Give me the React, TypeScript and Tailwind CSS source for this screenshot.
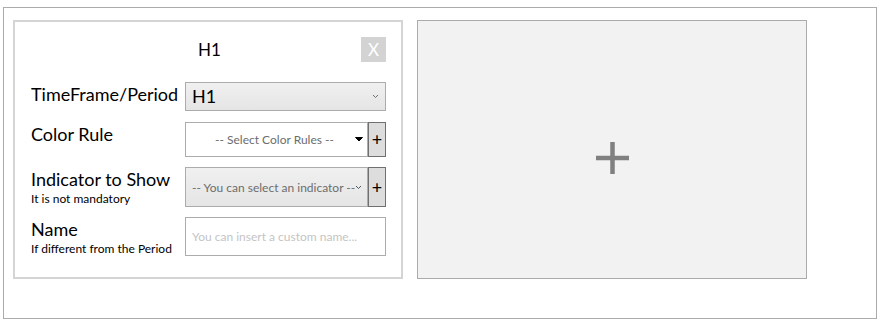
const font = "font-['Lato',sans-serif]"

function Chevron({ className }: { className?: string }) {
  return (
    <svg width="7" height="5" viewBox="0 0 7 5" className={className}>
      <path d="M1 1 L3.5 3.5 L6 1" fill="none" stroke="currentColor" strokeWidth="1" />
    </svg>
  )
}

function PlusButton() {
  return (
    <button className="w-[18px] h-full flex items-center justify-center bg-[#dddddd] border border-[#707070] text-black text-[18px] leading-none pb-[1px]">
      +
    </button>
  )
}

function Label({ title, hint }: { title: string; hint?: string }) {
  return (
    <div className="w-[154px] shrink-0 text-black">
      <div className="text-[18px] leading-[24px]">{title}</div>
      {hint && <div className="text-[12px] leading-[16px]">{hint}</div>}
    </div>
  )
}

export default function App() {
  return (
    <div className={`pt-[7px] pl-[3px] ${font}`}>
      <div className="w-[874px] h-[312px] border border-[#ababab] bg-white pl-[9px] pt-[12px] flex items-start gap-[14px]">
        {/* settings card */}
        <div className="w-[390px] h-[259px] border-2 border-[#d4d4d4] bg-white pl-[16px] pr-[15px] pt-[15px]">
          <div className="relative h-[25px] flex items-center justify-center">
            <span className="text-[17px] text-black pl-[2px]">H1</span>
            <button className="absolute right-0 top-0 w-[25px] h-[25px] bg-[#d3d3d3] text-white text-[17px] leading-none flex items-center justify-center">
              X
            </button>
          </div>

          <div className="flex mt-[20px]">
            <Label title="TimeFrame/Period" />
            <div className="w-[201px] h-[29px] border border-[#acacac] bg-gradient-to-b from-[#f0f0f0] to-[#e5e5e5] flex items-center justify-between pl-[6px] pr-[6px]">
              <span className="text-[18px] text-black">H1</span>
              <Chevron className="text-[#707070]" />
            </div>
          </div>

          <div className="flex mt-[11px]">
            <Label title="Color Rule" />
            <div className="flex h-[35px] w-[201px]">
              <div className="flex-1 border border-[#acacac] bg-white flex items-center pr-[4px]">
                <span className="flex-1 text-center text-[12px] text-[#6d6d6d] pl-[8px] pt-[1px]">-- Select Color Rules --</span>
                <svg width="8" height="5" viewBox="0 0 8 5">
                  <path d="M0.5 0.5 L4 4 L7.5 0.5 Z" fill="#000" stroke="#000" strokeWidth="1" strokeLinejoin="round" />
                </svg>
              </div>
              <PlusButton />
            </div>
          </div>

          <div className="flex mt-[10px]">
            <Label title="Indicator to Show" hint="It is not mandatory" />
            <div className="flex h-[40px] w-[201px]">
              <div className="flex-1 min-w-0 border border-[#acacac] bg-gradient-to-b from-[#f0f0f0] to-[#e5e5e5] flex items-center pl-[6px] pr-[5px]">
                <span className="flex-1 min-w-0 whitespace-nowrap text-[12px] text-[#6d6d6d] pt-[1px]">
                  -- You can select an indicator --
                </span>
                <Chevron className="text-[#555] ml-[1px]" />
              </div>
              <PlusButton />
            </div>
          </div>

          <div className="flex mt-[10px]">
            <Label title="Name" hint="If different from the Period" />
            <div className="w-[201px] h-[39px] border border-[#acacac] bg-white flex items-center pl-[6px]">
              <span className="text-[12px] text-[#c4c4c4] whitespace-nowrap">You can insert a custom name...</span>
            </div>
          </div>
        </div>

        {/* add card */}
        <div className="w-[390px] h-[259px] border border-[#a9abad] bg-[#f2f2f2] flex items-center justify-center">
          <svg width="33" height="32" viewBox="0 0 33 32" className="ml-[1px] mt-[17px]">
            <path d="M0 16 H33 M16.5 0 V32" stroke="#808080" strokeWidth="4.5" />
          </svg>
        </div>
      </div>
    </div>
  )
}
